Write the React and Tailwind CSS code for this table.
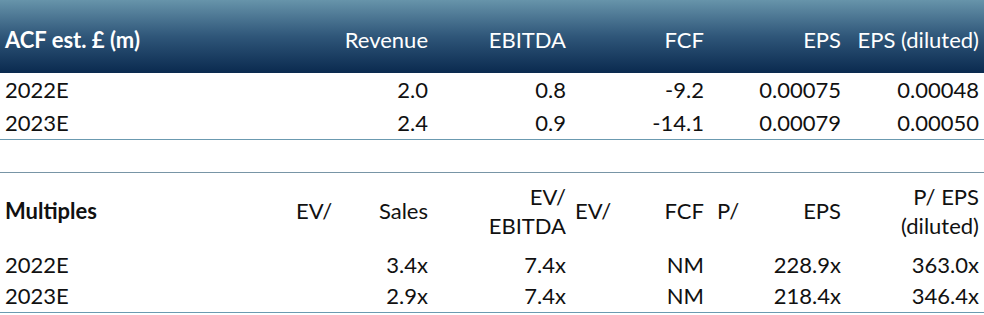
import React from "react";

const grid = "grid grid-cols-[295px_138px_138px_138px_137px_138px]";
const font = { fontFamily: "Lato, 'Open Sans', sans-serif" };

const estimates = [
  ["2022E", "2.0", "0.8", "-9.2", "0.00075", "0.00048"],
  ["2023E", "2.4", "0.9", "-14.1", "0.00079", "0.00050"],
];

const multiples = [
  ["2022E", "3.4x", "7.4x", "NM", "228.9x", "363.0x"],
  ["2023E", "2.9x", "7.4x", "NM", "218.4x", "346.4x"],
];

function DataRow({ cells, className = "" }) {
  return (
    <div className={`${grid} items-center ${className}`}>
      <div className="pl-[5px]">{cells[0]}</div>
      {cells.slice(1).map((c, i) => (
        <div key={i} className="text-right pr-[5px]">
          {c}
        </div>
      ))}
    </div>
  );
}

export default function App() {
  return (
    <div
      className="w-[984px] h-[315px] bg-white text-[22px] leading-[28px] text-[#111] overflow-hidden"
      style={font}
    >
      {/* Estimates table */}
      <div
        className={`${grid} h-[73px] items-center pt-[7px] text-white bg-linear-to-b from-[#6794aa] via-[#2f5679] to-[#0a2a4f]`}
      >
        <div className="pl-[5px] font-bold">ACF est. £ (m)</div>
        <div className="text-right pr-[5px]">Revenue</div>
        <div className="text-right pr-[5px]">EBITDA</div>
        <div className="text-right pr-[5px]">FCF</div>
        <div className="text-right pr-[5px]">EPS</div>
        <div className="text-right pr-[5px] whitespace-nowrap">EPS (diluted)</div>
      </div>
      <DataRow cells={estimates[0]} className="h-[33px]" />
      <DataRow
        cells={estimates[1]}
        className="h-[34px] border-b border-[#6b9ab0]"
      />

      <div className="h-[33px] border-b border-[#7895a6]" />

      {/* Valuation multiples table */}
      <div className={`${grid} h-[76px] items-center`}>
        <div className="pl-[5px] font-bold">Multiples</div>
        <div className="flex justify-between pl-[1px] pr-[5px]">
          <span>EV/</span>
          <span>Sales</span>
        </div>
        <div className="flex flex-col items-end pr-[5px] leading-[29px]">
          <span>EV/</span>
          <span>EBITDA</span>
        </div>
        <div className="flex justify-between pl-[4px] pr-[5px]">
          <span>EV/</span>
          <span>FCF</span>
        </div>
        <div className="flex justify-between pl-[8px] pr-[5px]">
          <span>P/</span>
          <span>EPS</span>
        </div>
        <div className="flex flex-col items-end pr-[5px] leading-[29px]">
          <span>P/ EPS</span>
          <span>(diluted)</span>
        </div>
      </div>
      <DataRow cells={multiples[0]} className="h-[31px]" />
      <DataRow
        cells={multiples[1]}
        className="h-[33px] border-b border-[#6b9ab0]"
      />
    </div>
  );
}
